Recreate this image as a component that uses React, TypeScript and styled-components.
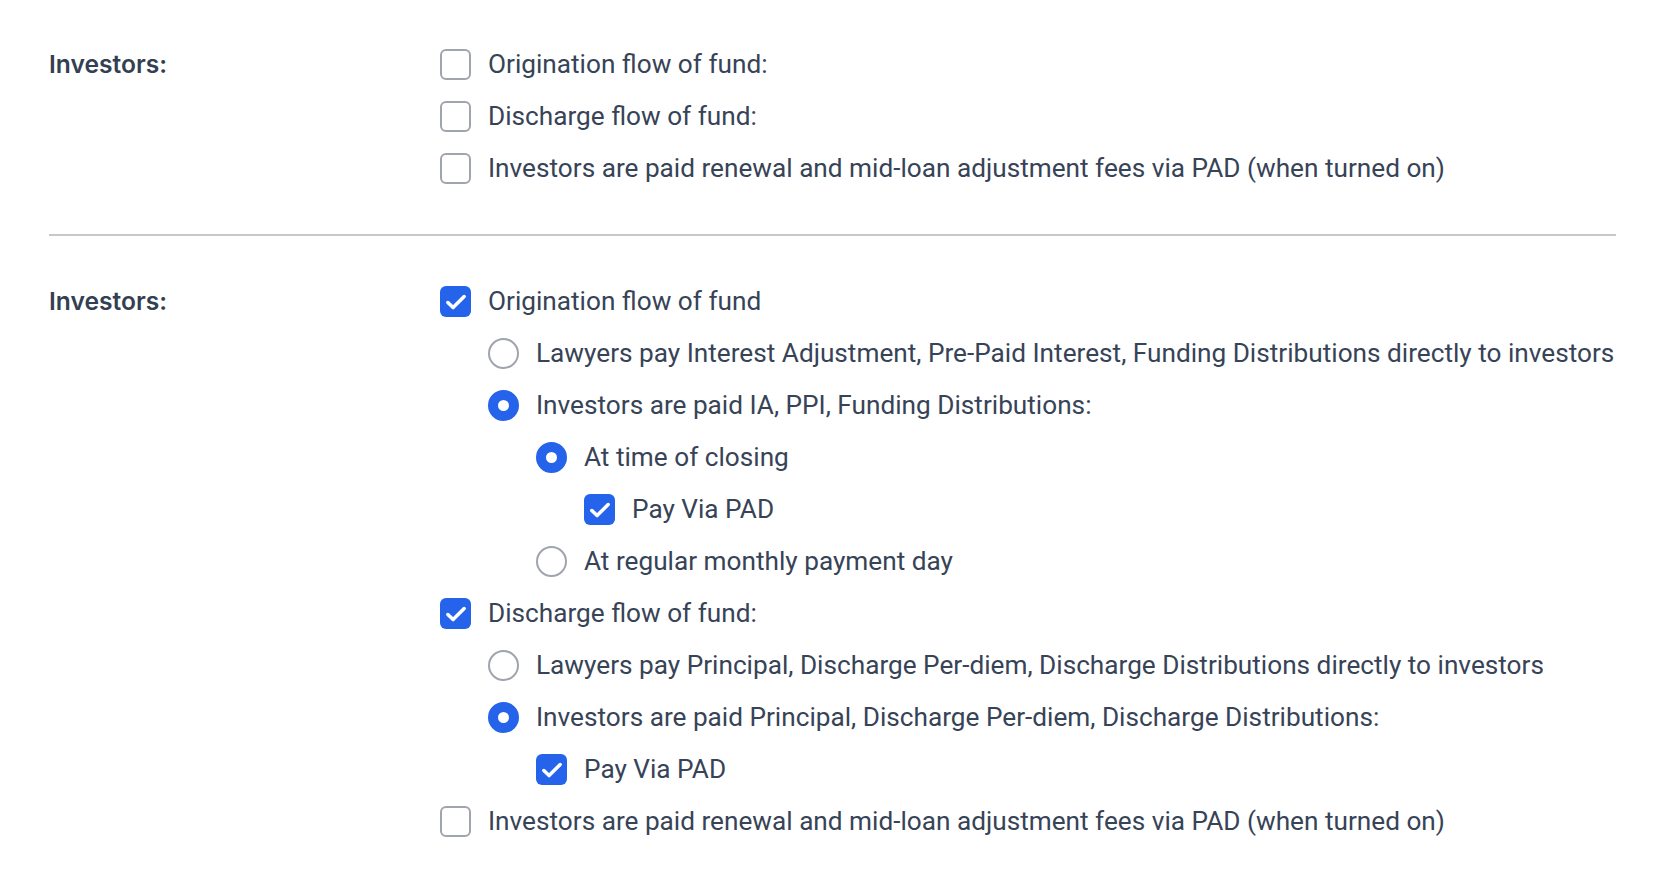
import React from "react";
import styled, { createGlobalStyle } from "styled-components";

const GlobalStyle = createGlobalStyle`
  body {
    margin: 0;
    background: #ffffff;
    font-family: Roboto, "Liberation Sans", sans-serif;
  }
`;

const Page = styled.div`
  padding: 49px 48px 40px 49px;
`;

const Section = styled.div`
  display: grid;
  grid-template-columns: 391px 1fr;
`;

const Label = styled.div`
  font-family: Inter, Roboto, sans-serif;
  font-weight: 600;
  font-size: 24.6px;
  line-height: 31px;
  color: #333f52;
`;

const Options = styled.div`
  display: flex;
  flex-direction: column;
  gap: 21px;
`;

const Nested = styled.div`
  display: flex;
  flex-direction: column;
  gap: 21px;
  padding-left: 48px;
`;

const Divider = styled.hr`
  margin: 50px 0;
  border: none;
  height: 2px;
  background: #c8c8c8;
`;

const Row = styled.label`
  display: flex;
  align-items: center;
  gap: 17px;
  font-size: 26.2px;
  line-height: 31px;
  color: #374357;
  white-space: nowrap;
`;

const Box = styled.span<{ $checked?: boolean }>`
  flex: none;
  width: 31px;
  height: 31px;
  box-sizing: border-box;
  border-radius: 6px;
  border: ${({ $checked }) => ($checked ? "none" : "2px solid #a0a4ad")};
  background: ${({ $checked }) => ($checked ? "#2563eb" : "#fff")};
  display: flex;
  align-items: center;
  justify-content: center;
`;

const Radio = styled.span<{ $checked?: boolean }>`
  flex: none;
  width: 31px;
  height: 31px;
  box-sizing: border-box;
  border-radius: 50%;
  border: ${({ $checked }) => ($checked ? "10px solid #2563eb" : "2px solid #a0a4ad")};
  background: #fff;
`;

type Item = {
  kind: "check" | "radio";
  checked?: boolean;
  text: string;
  children?: Item[];
};

const first: Item[] = [
  { kind: "check", text: "Origination flow of fund:" },
  { kind: "check", text: "Discharge flow of fund:" },
  { kind: "check", text: "Investors are paid renewal and mid-loan adjustment fees via PAD (when turned on)" },
];

const second: Item[] = [
  {
    kind: "check",
    checked: true,
    text: "Origination flow of fund",
    children: [
      {
        kind: "radio",
        text: "Lawyers pay Interest Adjustment, Pre-Paid Interest, Funding Distributions directly to investors",
      },
      {
        kind: "radio",
        checked: true,
        text: "Investors are paid IA, PPI, Funding Distributions:",
        children: [
          {
            kind: "radio",
            checked: true,
            text: "At time of closing",
            children: [{ kind: "check", checked: true, text: "Pay Via PAD" }],
          },
          { kind: "radio", text: "At regular monthly payment day" },
        ],
      },
    ],
  },
  {
    kind: "check",
    checked: true,
    text: "Discharge flow of fund:",
    children: [
      {
        kind: "radio",
        text: "Lawyers pay Principal, Discharge Per-diem, Discharge Distributions directly to investors",
      },
      {
        kind: "radio",
        checked: true,
        text: "Investors are paid Principal, Discharge Per-diem, Discharge Distributions:",
        children: [{ kind: "check", checked: true, text: "Pay Via PAD" }],
      },
    ],
  },
  { kind: "check", text: "Investors are paid renewal and mid-loan adjustment fees via PAD (when turned on)" },
];

function Tick() {
  return (
    <svg width="28" height="28" viewBox="0 0 24 24" fill="none">
      <path d="M5 12.5l4.5 4.3L19 7.3" stroke="#fff" strokeWidth="3" strokeLinecap="round" strokeLinejoin="round" />
    </svg>
  );
}

function Option({ item }: { item: Item }) {
  return (
    <>
      <Row>
        {item.kind === "check" ? (
          <Box $checked={item.checked}>{item.checked && <Tick />}</Box>
        ) : (
          <Radio $checked={item.checked} />
        )}
        {item.text}
      </Row>
      {item.children && (
        <Nested>
          {item.children.map((c, i) => (
            <Option key={i} item={c} />
          ))}
        </Nested>
      )}
    </>
  );
}

export default function App() {
  return (
    <>
      <GlobalStyle />
      <Page>
        <Section>
          <Label>Investors:</Label>
          <Options>
            {first.map((it, i) => (
              <Option key={i} item={it} />
            ))}
          </Options>
        </Section>
        <Divider />
        <Section>
          <Label>Investors:</Label>
          <Options>
            {second.map((it, i) => (
              <Option key={i} item={it} />
            ))}
          </Options>
        </Section>
      </Page>
    </>
  );
}
